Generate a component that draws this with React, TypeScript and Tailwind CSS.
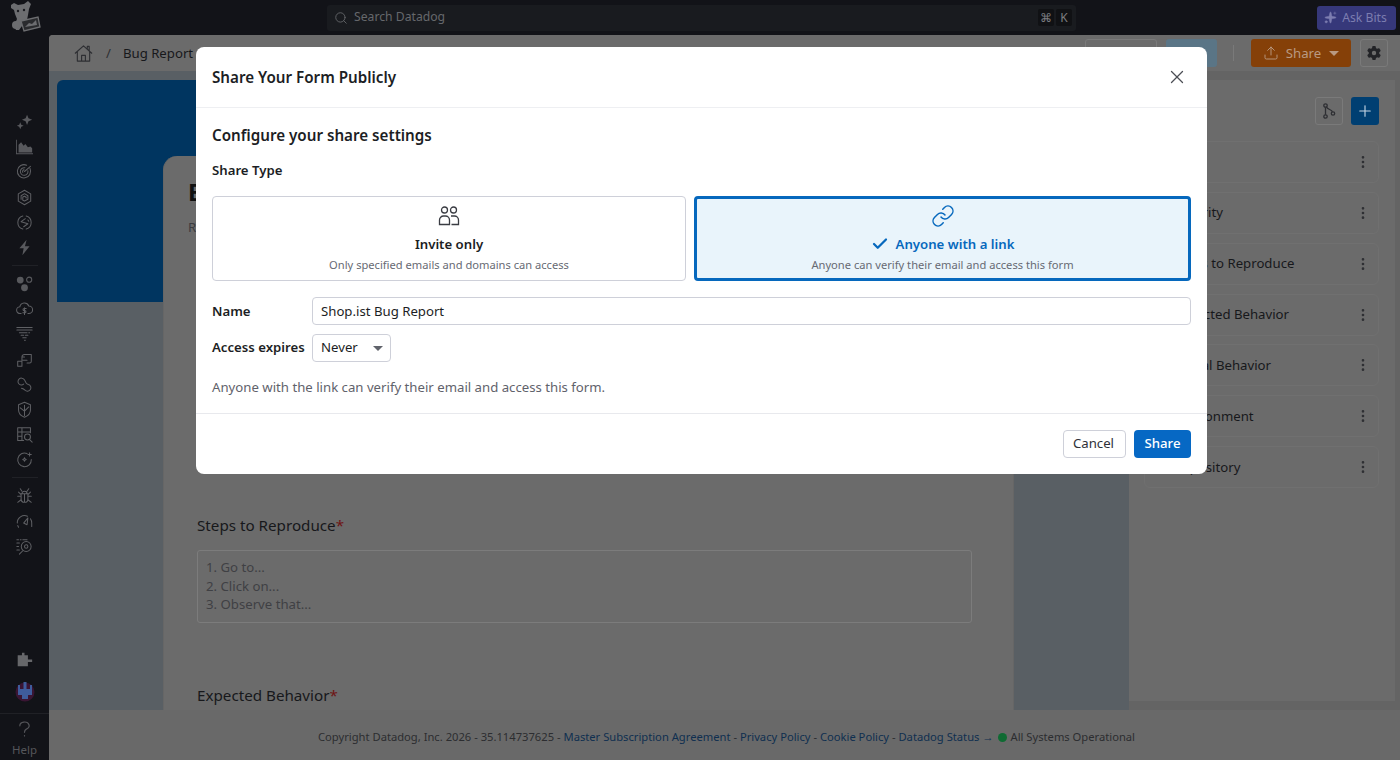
import { Check, EllipsisVertical, Link, Plus, Search, Sparkles, Upload, X } from 'lucide-react';
import { FaGear } from 'react-icons/fa6';
import type { ReactNode } from 'react';

const font = { fontFamily: '"Noto Sans", sans-serif' };

// sidebar glyphs, drawn on a 20x20 box
function NavIcon({ children, filled }: { children: ReactNode; filled?: boolean }) {
  return (
    <svg viewBox="0 0 20 20" className="h-[17px] w-[17px]" fill={filled ? '#58595d' : 'none'} stroke={filled ? 'none' : '#5f6064'} strokeWidth="1.200" strokeLinecap="round" strokeLinejoin="round">
      {children}
    </svg>
  );
}

const topIcons = [
  <NavIcon filled key="spark"><path d="M13 2l1.700 4.300L19 8l-4.300 1.700L13 14l-1.700-4.300L7 8l4.300-1.700zM5 11l1.200 2.800L9 15l-2.800 1.200L5 19l-1.200-2.800L1 15l2.800-1.200z" /></NavIcon>,
  <NavIcon filled key="area"><path d="M3 17V8l3-3 3 4 2-2 3 4 3-1 2 2v5zM0 2h1v16h19v1H0z" /></NavIcon>,
  <NavIcon key="target"><path d="M16.500 6.500A7.800 7.800 0 1 1 12.500 2.600M14 9a4.500 4.500 0 1 1-3.500-3.400M10 10l7-6M8 11a2 2 0 0 1 1.500-3" /></NavIcon>,
  <NavIcon key="hex"><path d="M10 1.500l7.300 4.200v8.600L10 18.500l-7.300-4.200V5.700zM6 12V8l4-2.500 4 2.500v4l-4 2.200-2-1V9.500l2-1 2 1.200v1" /></NavIcon>,
  <NavIcon key="rum"><path d="M12 2.300a8 8 0 0 1 0 15.400M8 2.300a8 8 0 0 0 0 15.400M11 5.500L6 9l8 2.500-5 3.500M14 7l1 1.500" /></NavIcon>,
  <NavIcon filled key="bolt"><path d="M12.500 1L4 11h5l-1.500 8L16 8.500h-5.500z" /></NavIcon>,
];

const midIcons = [
  <NavIcon filled key="dots"><circle cx="5" cy="6" r="4" /><circle cx="10" cy="15" r="4" /><circle cx="15.500" cy="5.500" r="3" fill="none" stroke="#58595d" strokeWidth="1.300" /></NavIcon>,
  <NavIcon key="cloud"><path d="M6 16H5a4 4 0 0 1-.5-8A5.500 5.500 0 0 1 15 7a4.500 4.500 0 0 1 0 9h-1M12 10H9.500a1.200 1.200 0 0 0 0 2.500h1a1.200 1.200 0 0 1 0 2.500H8M10 9v8" /></NavIcon>,
  <NavIcon key="filter"><path d="M1 3h18M1 6h18M4 9h9M15 9h1M6 12h3M11 12h3M8 15h4M10 18h1" /></NavIcon>,
  <NavIcon key="squares"><path d="M7 11V7a3 3 0 0 1 3-3h8v8a2 2 0 0 1-2 2h-3M7 7h3M2 12h5v6H2zM7 11h6" /></NavIcon>,
  <NavIcon key="loop"><path d="M9 9.500A4 4 0 1 1 9.500 4c1.500 1.500 1.500 3.500 3 5l2 1a4 4 0 1 1-4 6.500c-1-1-2-1.500-4-2" /></NavIcon>,
  <NavIcon key="shield"><path d="M10 1.500l7 3v6c0 4-3 7-7 8.500-4-1.500-7-4.500-7-8.500v-6zM10 5v12M5 8l5 4 5-5" /></NavIcon>,
  <NavIcon key="table"><path d="M9 17H2V2h15v6M2 7h15M7 2v15M2 12h5" /><circle cx="13.500" cy="13" r="3.500" /><path d="M16 16l3 3" /></NavIcon>,
  <NavIcon key="cycle"><path d="M13 3A8 8 0 1 0 18 10M10 8l.7 1.300L12 10l-1.300.7L10 12l-.7-1.300L8 10l1.300-.7zM16 2v4M14 4h4" /></NavIcon>,
];

const lowIcons = [
  <NavIcon key="bug"><path d="M6 8h8v6a4 4 0 0 1-8 0zM7 8a3 3 0 0 1 6 0M10 8v10M6 11H2M18 11h-4M6 15l-4 3M14 15l4 3M6 9L3 6M14 9l3-3M7 5L5 2M13 5l2-3" /></NavIcon>,
  <NavIcon key="gauge"><path d="M1.500 13a8.500 8.500 0 0 1 12-8M3 18l-1-2M9 13l5-6-1 8zM17 8a8.500 8.500 0 0 1 1.500 5v4" /></NavIcon>,
  <NavIcon key="scan"><circle cx="12" cy="10" r="5.800" /><circle cx="12" cy="10" r="2" /><path d="M1 2h2M5 2h1M8 2h5M1 6h3M1 10h2M1 14h3M8 15l-4 4" /></NavIcon>,
];

function Rail() {
  return (
    <aside className="flex h-full w-[49px] shrink-0 flex-col items-center bg-[#121318] pb-[3px]">
      {/* dog logo */}
      <svg viewBox="0 0 40 36" className="mr-[1px] h-[36px] w-[40px]">
        <path d="M7 5l3-2 4 2 6-1 4-3 3 3-2 5-1 6-1 5-4 1-1 5-3 4h-3l-2-4 3-7-2-5-1-4-3-2z" fill="#6c6d70" />
        <circle cx="12" cy="25" r="4" fill="#6c6d70" />
        <path d="M17 21l17-4 2 10-16 4z" fill="#2a2b2e" stroke="#6c6d70" strokeWidth="1.300" />
        <path d="M21 27l4-4 3 1 4-4 1 5z" fill="#6c6d70" />
        <circle cx="14" cy="11" r="1.200" fill="#1b1c20" />
        <circle cx="20" cy="10" r="1.200" fill="#1b1c20" />
      </svg>
      <div className="mt-[77px] flex flex-col items-center gap-[8.200px]">{topIcons}</div>
      <div className="my-[9px] h-px w-[26px] bg-[#202126]" />
      <div className="flex flex-col items-center gap-[8.200px]">{midIcons}</div>
      <div className="my-[9px] h-px w-[26px] bg-[#202126]" />
      <div className="flex flex-col items-center gap-[8.200px]">{lowIcons}</div>
      <div className="mt-auto flex flex-col items-center">
        <svg viewBox="0 0 20 20" className="h-[17px] w-[17px]" fill="#66676a">
          <path d="M7 2h3v3h4v5h5v3h-5v5H2V5h5z" />
        </svg>
        <svg viewBox="0 0 20 20" className="mt-[14px] h-[20px] w-[20px]">
          <circle cx="10" cy="10" r="9.500" fill="#3a1533" />
          <path d="M8.500 0h3v7H15V3h2v10h-4v4H7v-4H3V3h2v4h3.500z" fill="#3f5c9c" />
        </svg>
      </div>
      <div className="mt-[11px] flex w-full flex-col items-center border-t border-[#202126] pt-[7px] text-[#55565a]">
        <svg viewBox="0 0 14 18" fill="none" stroke="#55565a" strokeWidth="1.300" strokeLinecap="round" className="h-[17px] w-[13px]">
          <path d="M2 5a5 4 0 1 1 7 3.600c-1.500.8-2 1.700-2 3.400M7 15.500v.5" />
        </svg>
        <span className="mt-[5px] text-[11.500px] leading-[14px]">Help</span>
      </div>
    </aside>
  );
}

function SearchBar() {
  return (
    <div className="relative flex h-[35px] shrink-0 items-center justify-between bg-[#121318] pr-[4px]">
      <div className="ml-[278px] flex h-[26px] w-[749px] items-center rounded-[3px] bg-[#191b1f] pl-[7px] pr-[4px] text-[12.200px] text-[#66686c]">
        <Search className="h-[14px] w-[14px]" strokeWidth={1.500} />
        <span className="ml-[6px]">Search Datadog</span>
        <span className="ml-auto flex gap-[2px] text-[12px] leading-[17px] text-[#7b7c80]">
          <span className="w-[16px] rounded-[2px] bg-[#101114] text-center">⌘</span>
          <span className="w-[16px] rounded-[2px] bg-[#101114] text-center">K</span>
        </span>
      </div>
      <button className="flex h-[24px] w-[79px] items-center justify-center gap-[5px] rounded-[3px] bg-[#36387a] pr-[2px] text-[12.200px] text-[#7c7db0]">
        <Sparkles className="h-[13px] w-[13px]" fill="#7c7db0" strokeWidth={1} />
        <span className="pt-[1px]">Ask Bits</span>
      </button>
    </div>
  );
}

function PageHeader() {
  return (
    <header className="flex h-[36px] shrink-0 items-center bg-[#6b6b6b] pl-[25px] pr-[12px] text-[13.200px] text-[#17181b]">
      <svg viewBox="0 0 20 20" fill="none" stroke="#2e2f33" strokeWidth="1.200" strokeLinejoin="round" className="h-[19px] w-[19px]">
        <path d="M1 10l9-8 9 8M3.500 8v10h13V8M14 5V2.500h2V7M8 18v-6h4v6" />
      </svg>
      <span className="ml-[13px] pt-[1px] text-[#2e2f33]">/</span>
      <span className="ml-[12px] pt-[1px]">Bug Report</span>
      <div className="ml-auto flex h-[28px] items-center">
        <div className="h-full w-[72px] rounded-[3px] border border-[#7a7a7a]" />
        <div className="ml-[9px] h-full w-[51px] rounded-[3px] bg-[#5a7586]" />
        <div className="ml-[16px] h-[16px] w-px bg-[#7a7a7a]" />
        <button className="ml-[17px] flex h-full w-[100px] items-center justify-center rounded-[3px] bg-[#854008] text-[#b99a82]">
          <Upload className="h-[16px] w-[16px]" strokeWidth={1.400} />
          <span className="ml-[7px] pt-[1px]">Share</span>
          <span className="ml-[8px] h-0 w-0 border-x-[5px] border-t-[5px] border-x-transparent border-t-[#b99a82]" />
        </button>
        <button className="ml-[9px] flex h-full w-[28px] items-center justify-center rounded-[3px] border border-[#7a7a7a]">
          <FaGear className="h-[14px] w-[14px] text-[#222327]" />
        </button>
      </div>
    </header>
  );
}

function FormField({ label, children }: { label: string; children: ReactNode }) {
  return (
    <div>
      <div className="text-[15.200px] leading-[24px] text-[#17181b]">
        {label}
        <span className="text-[#6e1414]">*</span>
      </div>
      {children}
    </div>
  );
}

function FormPreview() {
  return (
    <div className="relative flex-1 overflow-hidden bg-[#595f64]">
      <div className="ml-[8px] mt-[9px] h-[222px] w-[957px] rounded-tl-[6px] bg-[#003560]" />
      <div className="absolute left-[114px] top-[85px] h-[640px] w-[851px] rounded-t-[14px] border-x border-[#666] bg-[#6b6b6b] px-[24px] pt-[20px]">
        <h1 className="text-[24px] font-bold leading-[32px] text-[#111]">Bug Report</h1>
        <p className="mt-[9px] text-[13.200px] leading-[20px] text-[#3b3c40]">Report a bug to the team</p>
        <div className="ml-[9px] mt-[276px] w-[775px]">
          <FormField label="Steps to Reproduce">
            <div className="mt-[13px] h-[73px] rounded-[3px] border border-[#7c7c7c] px-[8px] py-[7px] text-[13.200px] leading-[18.500px] text-[#3f4044]">
              <div>1. Go to...</div>
              <div>2. Click on...</div>
              <div>3. Observe that...</div>
            </div>
          </FormField>
          <div className="mt-[60px]">
            <FormField label="Expected Behavior">
              <div className="mt-[13px] h-[73px] rounded-[3px] border border-[#7c7c7c]" />
            </FormField>
          </div>
        </div>
      </div>
    </div>
  );
}

const fieldNames = ['Title', 'Severity', 'Steps to Reproduce', 'Expected Behavior', 'Actual Behavior', 'Environment', 'Repository'];

function FieldPanel() {
  return (
    <div className="flex w-[271px] shrink-0 flex-col bg-[#646464] pb-[9px] pr-[5px] pt-[9px]">
      <div className="flex-1 bg-[#6b6b6b] pl-[15px] pr-[16px] pt-[17px]">
        <div className="flex justify-end gap-[8px]">
          <button className="flex h-[28px] w-[28px] items-center justify-center rounded-[3px] border border-[#7a7a7a]">
            <svg viewBox="0 0 16 16" fill="none" stroke="#2e2f33" strokeWidth="1.300" className="h-[16px] w-[16px]">
              <circle cx="4.500" cy="2.500" r="1.700" />
              <circle cx="4.500" cy="13.500" r="1.700" />
              <circle cx="12" cy="10.500" r="1.700" />
              <path d="M4.500 4.200v7.600M5.500 4c1 2.500 5 2.500 6 4.800" />
            </svg>
          </button>
          <button className="flex h-[28px] w-[28px] items-center justify-center rounded-[3px] bg-[#003f72] text-[#c5d6e4]">
            <Plus className="h-[18px] w-[18px]" strokeWidth={1.500} />
          </button>
        </div>
        <div className="mt-[16px] flex flex-col gap-[8.870px]">
          {fieldNames.map((name) => (
            <div key={name} className="flex h-[42px] items-center justify-between rounded-[6px] border border-[#707070] pl-[29px] pr-[7px] text-[13.200px] text-[#17181b]">
              <span className="pt-[1px]">{name}</span>
              <EllipsisVertical className="h-[16px] w-[16px] text-[#2e2f33]" strokeWidth={2} />
            </div>
          ))}
        </div>
      </div>
    </div>
  );
}

function Footer() {
  const link = 'text-[#0f2f50]';
  return (
    <footer className="flex h-[50px] shrink-0 items-center justify-center bg-[#696969] pl-[4px] pt-[4px] text-[11.200px] text-[#2c2d30]">
      <span>Copyright Datadog, Inc. 2026 - 35.114737625 -&nbsp;</span>
      <span className={link}>Master Subscription Agreement</span>
      <span>&nbsp;-&nbsp;</span>
      <span className={link}>Privacy Policy</span>
      <span>&nbsp;-&nbsp;</span>
      <span className={link}>Cookie Policy</span>
      <span>&nbsp;-&nbsp;</span>
      <span className={link}>Datadog Status →</span>
      <span className="mx-[4px] h-[9px] w-[9px] rounded-full bg-[#0f6b33]" />
      <span>All Systems Operational</span>
    </footer>
  );
}

function ShareOption({ selected, icon, title, text, className }: { selected?: boolean; icon: ReactNode; title: string; text: string; className: string }) {
  return (
    <button
      className={
        className +
        (selected
          ? ' border-[3px] border-[#0668bd] bg-[#e9f4fb] pt-[5px] text-[#0668bd]'
          : ' border border-[#ced0d9] bg-white pt-[7px] text-[#3a3c43]') +
        ' flex h-[85px] flex-col items-center rounded-[4px]'
      }
    >
      <span className="flex h-[24px] items-center">{icon}</span>
      <span className={(selected ? 'text-[#0668bd]' : 'text-[#1c1e24]') + ' mt-[6px] flex items-center gap-[7px] text-[13.200px] font-semibold leading-[20px]'}>
        {selected && <Check className="h-[18px] w-[18px]" strokeWidth={3} />}
        {title}
      </span>
      <span className="mt-[1px] text-[11.150px] leading-[20px] text-[#676a73]">{text}</span>
    </button>
  );
}

function ShareDialog() {
  return (
    <div className="absolute left-[196px] top-[47px] flex h-[427px] w-[1011px] flex-col rounded-[8px] bg-white text-[#1c1e24]">
      <div className="flex h-[61px] shrink-0 items-center justify-between border-b border-[#eeeff2] pl-[16px] pr-[19px]">
        <h2 className="text-[15.200px] font-semibold">Share Your Form Publicly</h2>
        <X className="h-[22px] w-[22px] text-[#4c4e55]" strokeWidth={1.400} />
      </div>
      <div className="flex-1 px-[16px]">
        <h3 className="mt-[15px] text-[15.200px] font-semibold leading-[24px]">Configure your share settings</h3>
        <div className="mt-[13px] text-[13.200px] font-semibold leading-[20px]">Share Type</div>
        <div className="mt-[16px] flex gap-[8px]">
          <ShareOption
            className="w-[474px]"
            icon={
              <svg viewBox="0 0 22 20" fill="none" stroke="#3a3c43" strokeWidth="1.300" className="h-[20px] w-[22px]">
                <circle cx="6.500" cy="4" r="3" />
                <circle cx="15.500" cy="4" r="3" />
                <path d="M1.500 18.500V14a4 4 0 0 1 4-4h2a4 4 0 0 1 4 4v4.500zM13 10h3.500a4 4 0 0 1 4 4v4.500H13.500" />
              </svg>
            }
            title="Invite only"
            text="Only specified emails and domains can access"
          />
          <ShareOption
            selected
            className="flex-1"
            icon={<Link className="h-[24px] w-[24px]" strokeWidth={1.500} />}
            title="Anyone with a link"
            text="Anyone can verify their email and access this form"
          />
        </div>
        <div className="mt-[16px] flex items-center text-[13.200px]">
          <label className="w-[100px] pt-[1px] font-semibold">Name</label>
          <div className="flex h-[28px] flex-1 items-center rounded-[4px] border border-[#ced0d9] px-[8px] pt-[1px]">Shop.ist Bug Report</div>
        </div>
        <div className="mt-[9px] flex items-center text-[13.200px]">
          <label className="w-[100px] font-semibold">Access expires</label>
          <div className="flex h-[28px] w-[79px] items-center justify-between rounded-[4px] border border-[#ced0d9] pl-[8px] pr-[7px]">
            Never
            <span className="h-0 w-0 border-x-[5px] border-t-[5px] border-x-transparent border-t-[#60636b]" />
          </div>
        </div>
        <p className="mt-[15px] text-[13.200px] leading-[20px] text-[#5f626b]">Anyone with the link can verify their email and access this form.</p>
      </div>
      <div className="flex h-[61px] shrink-0 items-center justify-end gap-[8px] border-t border-[#e8e9ed] px-[16px]">
        <button className="h-[28px] w-[63px] rounded-[4px] border border-[#ced0d9] pr-[2px] text-[13.200px] text-[#2e3038]">Cancel</button>
        <button className="h-[28px] w-[57px] rounded-[4px] bg-[#0668c4] text-[13.200px] font-medium text-white">Share</button>
      </div>
    </div>
  );
}

export default function App() {
  return (
    <div className="relative flex h-[760px] w-[1400px] overflow-hidden" style={font}>
      <Rail />
      <div className="flex min-w-0 flex-1 flex-col bg-[#121318]">
        <SearchBar />
        <div className="flex min-h-0 flex-1 flex-col overflow-hidden rounded-tl-[4px] bg-[#6b6b6b]">
          <PageHeader />
          <div className="flex min-h-0 flex-1">
            <FormPreview />
            <FieldPanel />
          </div>
          <Footer />
        </div>
      </div>
      <ShareDialog />
    </div>
  );
}
